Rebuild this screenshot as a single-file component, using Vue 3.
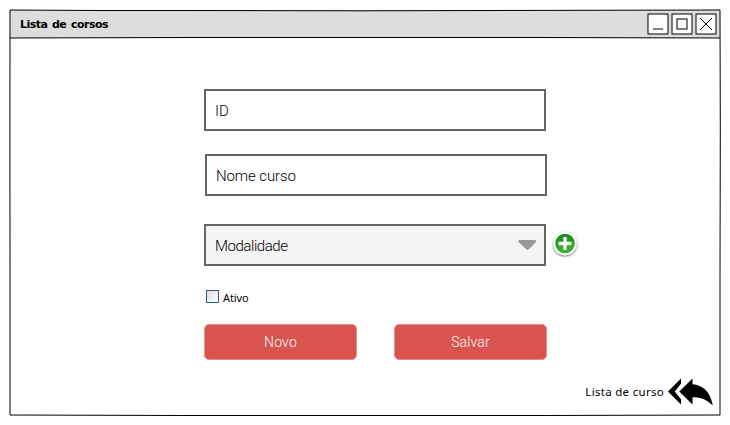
<script setup>
import { ref } from 'vue'

const title = 'Lista de corsos'
const active = ref(false)
</script>

<template>
  <main class="window">
    <svg class="outline" width="730" height="425" viewBox="0 0 730 425" aria-hidden="true">
      <path d="M10 10 L100 10.5 L187 10.5 L360 10.8 L540 10.4 L720 10 L720.3 130 L720 280 L720 415 L540 415.5 L360 415.5 L187 415.5 L10 415 L10 280 L9.9 130 Z" />
      <path d="M10 38 L187 37.5 L360 37.5 L540 37.5 L720 38" />
    </svg>
    <header class="titlebar">
      <h1 class="title">{{ title }}</h1>
      <div class="controls">
        <svg width="22" height="22" viewBox="0 0 22 22"><rect x="1" y="1" width="20" height="20" /><path d="M6 16H16" /></svg>
        <svg width="22" height="22" viewBox="0 0 22 22"><rect x="1" y="1" width="20" height="20" /><rect x="6" y="6" width="10" height="10" /></svg>
        <svg width="22" height="22" viewBox="0 0 22 22"><rect x="1" y="1" width="20" height="20" /><path class="cross" d="M5 5L17 17M17 5L5 17" /></svg>
      </div>
    </header>

    <form class="form" @submit.prevent>
      <div class="field id"><span>ID</span></div>
      <div class="field name"><span>Nome curso</span></div>
      <div class="select-row">
        <div class="field select">
          <span>Modalidade</span>
          <svg width="20" height="11" viewBox="0 0 20 11"><path d="M2 0H18.5L19.5 1.5L12 9Q10.5 10.8 9 9L1 1.5Z" fill="#999" /></svg>
        </div>
        <svg class="add" width="30" height="30" viewBox="0 0 30 30">
          <defs>
            <linearGradient id="green" x1="0" y1="0" x2="0" y2="1"><stop offset="0" stop-color="#168b16" /><stop offset="1" stop-color="#3db82f" /></linearGradient>
            <filter id="shade" x="-30%" y="-30%" width="160%" height="160%"><feDropShadow dx="0" dy="1" stdDeviation="1" flood-color="#000" flood-opacity=".65" /></filter>
          </defs>
          <circle cx="15" cy="13.5" r="11.7" fill="#fff" filter="url(#shade)" />
          <circle cx="15" cy="13.5" r="9.8" fill="url(#green)" />
          <path d="M15 7V20M8.5 13.5H21.5" stroke="#fff" stroke-width="3.3" />
        </svg>
      </div>
      <label class="check"><span class="box" :class="{ on: active }"></span><span class="check-text">Ativo</span></label>
      <div class="actions">
        <button type="button"><span>Novo</span></button>
        <button type="button"><span>Salvar</span></button>
      </div>
    </form>

    <footer class="footer">
      <span class="back-text">Lista de curso</span>
      <svg width="47" height="30" viewBox="0 0 47 30">
        <path d="M1 14.5L14 1.5V6.8L7.8 14.5L14 22.2V27.5Z" />
        <path d="M12.3 14.5L25.5 1.5V7.3C36 8 43.5 15 45.8 28.5C39.5 22.5 34 20.3 25.5 20.3V27.5Z" />
      </svg>
    </footer>
  </main>
</template>

<style>
body { margin: 0; background: #fff; }
</style>

<style scoped>
.window {
  position: relative;
  box-sizing: border-box;
  width: 730px;
  height: 425px;
  padding: 10px;
  display: flex;
  flex-direction: column;
  overflow: hidden;
  color: #000;
  font-family: "Liberation Sans", sans-serif;
}
.outline { position: absolute; inset: 0; pointer-events: none; }
.outline path { fill: none; stroke: #000; stroke-width: 1; }
.titlebar {
  height: 28px;
  flex: none;
  background: #ddd;
  display: flex;
  align-items: center;
  justify-content: space-between;
  padding: 0 3px 0 10px;
  box-sizing: border-box;
}
.title { margin: 2px 0 0; font: 900 11px/16px "DejaVu Sans", sans-serif; letter-spacing: -0.55px; word-spacing: 1.5px; }
.controls { display: flex; gap: 2px; }
.controls svg { display: block; }
.controls rect, .controls path { fill: #fff; stroke: #000; stroke-width: 1; }
.controls .cross { fill: none; }
.form { margin: 51px 0 0 194px; width: 380px; display: flex; flex-direction: column; }
.field {
  box-sizing: border-box;
  width: 342px;
  height: 42px;
  border: 2px solid #666;
  display: flex;
  align-items: center;
  padding: 0 9px;
  font: 300 15px/18px Roboto, sans-serif;
}
.field span { margin-top: 1px; }
.name { margin: 23px 0 0 1px; }
.name span { letter-spacing: -0.1px; }
.select-row { display: flex; margin-top: 28px; align-items: center; }
.select { background: #f4f4f4; justify-content: space-between; padding-right: 7px; }
.select span { letter-spacing: -0.45px; }
.add { flex: none; margin: -1px 0 0 4px; }
.check { display: flex; align-items: center; height: 15px; margin: 23px 0 0 2px; }
.box { box-sizing: border-box; width: 13px; height: 13px; border: 1px solid #2f5a88; background: linear-gradient(135deg, #dedede, #fff); }
.box.on { background: #2f5a88; }
.check-text { margin: 3px 0 0 4px; font: 11px/14px "Noto Sans", sans-serif; letter-spacing: -0.1px; }
.actions { display: flex; gap: 37px; margin-top: 20px; }
.actions button {
  width: 153px;
  height: 36px;
  box-sizing: border-box;
  padding: 0;
  border: 1px solid #e38f8c;
  border-radius: 5px;
  background: #d9534f;
  color: #fff;
  font: 300 14px/20px Roboto, sans-serif;
  letter-spacing: 0.15px;
}
.footer { margin-top: auto; display: flex; align-items: center; justify-content: flex-end; padding: 0 6px 8px 0; }
.back-text { font: 11.5px/14px "Noto Sans", sans-serif; letter-spacing: 0.3px; margin: 0 3px 0 0; }
</style>
